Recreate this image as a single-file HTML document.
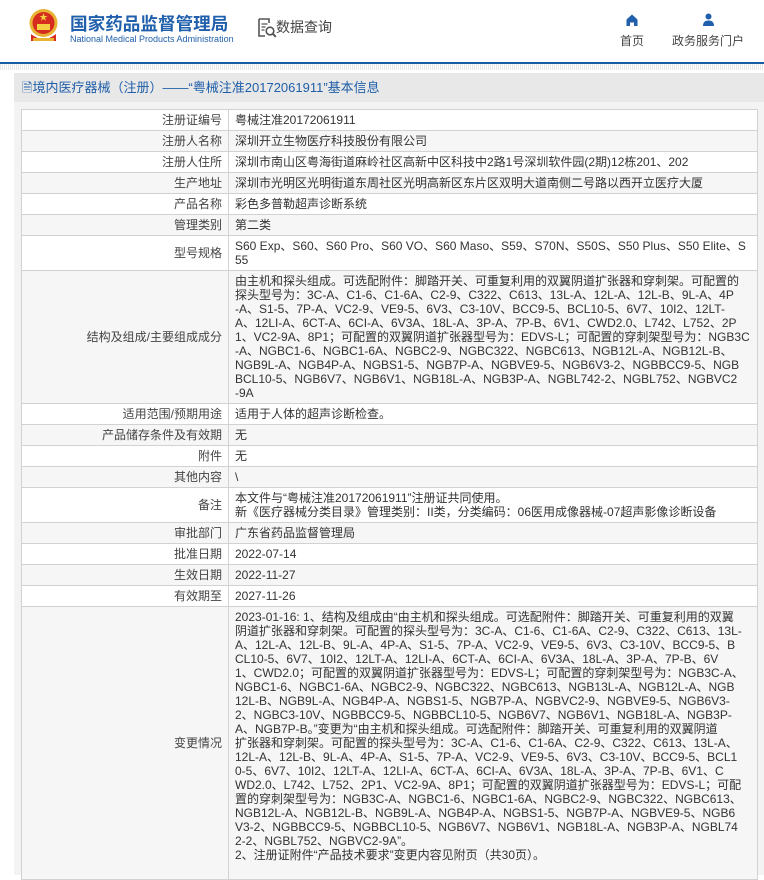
<!DOCTYPE html>
<html><head><meta charset="utf-8"><style>
*{margin:0;padding:0;box-sizing:border-box}
body{width:764px;height:875px;overflow:hidden;background:#fff;font-family:"Liberation Sans","Noto Sans CJK SC",sans-serif;color:#333;position:relative}
.hdr{position:absolute;left:0;top:0;width:764px;height:62px;background:#fff}
.line{position:absolute;left:0;top:62px;width:764px;height:2px;background:#1a5ba6}
.dots{position:absolute;left:0;top:64px;width:764px;height:6px;background:repeating-linear-gradient(90deg,#e6e6e6 0 1px,#fff 1px 2px)}
.panel{position:absolute;left:14px;top:73px;width:750px;height:802px;background:#f3f3f3}
.ttl{height:29px;background:#e8e8e8;color:#1f5ea8;font-size:13px;line-height:29px;padding-left:8px;white-space:nowrap}
table{position:absolute;left:7px;top:36px;width:737px;border-collapse:collapse;font-size:12px;background:#fff}
td{border:1px solid #d2d2d2;line-height:14px;padding:3px 6px 3px 6px;vertical-align:middle;white-space:nowrap;overflow:hidden}
td.l{width:207px;text-align:right;padding-right:6px;color:#444}
tr:nth-child(even) td{background:#f6f6f6}
</style></head><body>
<div class="hdr">
 <svg style="position:absolute;left:28px;top:8px" width="31" height="36" viewBox="0 0 31 36">
  <circle cx="15.5" cy="15" r="14" fill="#e8b233"/>
  <circle cx="15.5" cy="15" r="11" fill="#d62b1f"/>
  <polygon points="15.5,5 16.5,8 19.5,8 17,9.8 18,12.8 15.5,11 13,12.8 14,9.8 11.5,8 14.5,8" fill="#f5d040"/>
  <rect x="9" y="16" width="13" height="6" fill="#f5d040"/>
  <path d="M3 26 Q15.5 36 28 26 L28 33 L3 33Z" fill="#d62b1f"/>
  <rect x="5" y="30" width="21" height="3" fill="#e8b233"/>
 </svg>
 <div style="position:absolute;left:70px;top:11px;font-size:17.6px;font-weight:bold;color:#1f5fab;white-space:nowrap">国家药品监督管理局</div>
 <div style="position:absolute;left:70px;top:34px;font-size:9px;color:#1f5fab;white-space:nowrap">National Medical Products Administration</div>
 <svg style="position:absolute;left:257px;top:17px" width="20" height="22" viewBox="0 0 20 22">
  <path d="M2 2h10v4M2 2v17h6" fill="none" stroke="#555" stroke-width="1.6"/>
  <path d="M4.5 7h6M4.5 10h4M4.5 13h3" stroke="#555" stroke-width="1.3"/>
  <circle cx="13" cy="14" r="3.8" fill="none" stroke="#555" stroke-width="1.6"/>
  <path d="M15.8 16.8l3 3" stroke="#555" stroke-width="2"/>
 </svg>
 <div style="position:absolute;left:276px;top:17px;font-size:14px;color:#444;white-space:nowrap">数据查询</div>
 <svg style="position:absolute;left:626px;top:14px" width="12" height="12" viewBox="0 0 12 12"><path d="M6 0.5L11.5 5.5V12H8V8.5H4V12H0.5V5.5Z" fill="#1f5fab"/></svg>
 <div style="position:absolute;left:620px;top:32px;font-size:12px;color:#444">首页</div>
 <svg style="position:absolute;left:702px;top:13px" width="13" height="13" viewBox="0 0 13 13"><circle cx="6.5" cy="3.5" r="3" fill="#1f5fab"/><path d="M1 13Q1 7.5 6.5 7.5Q12 7.5 12 13Z" fill="#1f5fab"/></svg>
 <div style="position:absolute;left:672px;top:32px;font-size:12px;color:#444;white-space:nowrap">政务服务门户</div>
</div>
<div class="line"></div><div class="dots"></div>
<div class="panel">
 <div class="ttl">🗎境内医疗器械（注册）——“粤械注准20172061911”基本信息</div>
 <table>
 <tr><td class="l">注册证编号</td><td>粤械注准20172061911</td></tr>
 <tr><td class="l">注册人名称</td><td>深圳开立生物医疗科技股份有限公司</td></tr>
 <tr><td class="l">注册人住所</td><td>深圳市南山区粤海街道麻岭社区高新中区科技中2路1号深圳软件园(2期)12栋201、202</td></tr>
 <tr><td class="l">生产地址</td><td>深圳市光明区光明街道东周社区光明高新区东片区双明大道南侧二号路以西开立医疗大厦</td></tr>
 <tr><td class="l">产品名称</td><td>彩色多普勒超声诊断系统</td></tr>
 <tr><td class="l">管理类别</td><td>第二类</td></tr>
 <tr><td class="l">型号规格</td><td>S60 Exp、S60、S60 Pro、S60 VO、S60 Maso、S59、S70N、S50S、S50 Plus、S50 Elite、S<br>55</td></tr>
 <tr><td class="l">结构及组成/主要组成成分</td><td>由主机和探头组成。可选配附件：脚踏开关、可重复利用的双翼阴道扩张器和穿刺架。可配置的<br>探头型号为：3C-A、C1-6、C1-6A、C2-9、C322、C613、13L-A、12L-A、12L-B、9L-A、4P<br>-A、S1-5、7P-A、VC2-9、VE9-5、6V3、C3-10V、BCC9-5、BCL10-5、6V7、10I2、12LT-<br>A、12LI-A、6CT-A、6CI-A、6V3A、18L-A、3P-A、7P-B、6V1、CWD2.0、L742、L752、2P<br>1、VC2-9A、8P1；可配置的双翼阴道扩张器型号为：EDVS-L；可配置的穿刺架型号为：NGB3C<br>-A、NGBC1-6、NGBC1-6A、NGBC2-9、NGBC322、NGBC613、NGB12L-A、NGB12L-B、<br>NGB9L-A、NGB4P-A、NGBS1-5、NGB7P-A、NGBVE9-5、NGB6V3-2、NGBBCC9-5、NGB<br>BCL10-5、NGB6V7、NGB6V1、NGB18L-A、NGB3P-A、NGBL742-2、NGBL752、NGBVC2<br>-9A</td></tr>
 <tr><td class="l">适用范围/预期用途</td><td>适用于人体的超声诊断检查。</td></tr>
 <tr><td class="l">产品储存条件及有效期</td><td>无</td></tr>
 <tr><td class="l">附件</td><td>无</td></tr>
 <tr><td class="l">其他内容</td><td>\</td></tr>
 <tr><td class="l">备注</td><td>本文件与“粤械注准20172061911”注册证共同使用。<br>新《医疗器械分类目录》管理类别：II类，分类编码：06医用成像器械-07超声影像诊断设备</td></tr>
 <tr><td class="l">审批部门</td><td>广东省药品监督管理局</td></tr>
 <tr><td class="l">批准日期</td><td>2022-07-14</td></tr>
 <tr><td class="l">生效日期</td><td>2022-11-27</td></tr>
 <tr><td class="l">有效期至</td><td>2027-11-26</td></tr>
 <tr><td class="l">变更情况</td><td>2023-01-16: 1、结构及组成由“由主机和探头组成。可选配附件：脚踏开关、可重复利用的双翼<br>阴道扩张器和穿刺架。可配置的探头型号为：3C-A、C1-6、C1-6A、C2-9、C322、C613、13L-<br>A、12L-A、12L-B、9L-A、4P-A、S1-5、7P-A、VC2-9、VE9-5、6V3、C3-10V、BCC9-5、B<br>CL10-5、6V7、10I2、12LT-A、12LI-A、6CT-A、6CI-A、6V3A、18L-A、3P-A、7P-B、6V<br>1、CWD2.0；可配置的双翼阴道扩张器型号为：EDVS-L；可配置的穿刺架型号为：NGB3C-A、<br>NGBC1-6、NGBC1-6A、NGBC2-9、NGBC322、NGBC613、NGB13L-A、NGB12L-A、NGB<br>12L-B、NGB9L-A、NGB4P-A、NGBS1-5、NGB7P-A、NGBVC2-9、NGBVE9-5、NGB6V3-<br>2、NGBC3-10V、NGBBCC9-5、NGBBCL10-5、NGB6V7、NGB6V1、NGB18L-A、NGB3P-<br>A、NGB7P-B。”变更为“由主机和探头组成。可选配附件：脚踏开关、可重复利用的双翼阴道<br>扩张器和穿刺架。可配置的探头型号为：3C-A、C1-6、C1-6A、C2-9、C322、C613、13L-A、<br>12L-A、12L-B、9L-A、4P-A、S1-5、7P-A、VC2-9、VE9-5、6V3、C3-10V、BCC9-5、BCL1<br>0-5、6V7、10I2、12LT-A、12LI-A、6CT-A、6CI-A、6V3A、18L-A、3P-A、7P-B、6V1、C<br>WD2.0、L742、L752、2P1、VC2-9A、8P1；可配置的双翼阴道扩张器型号为：EDVS-L；可配<br>置的穿刺架型号为：NGB3C-A、NGBC1-6、NGBC1-6A、NGBC2-9、NGBC322、NGBC613、<br>NGB12L-A、NGB12L-B、NGB9L-A、NGB4P-A、NGBS1-5、NGB7P-A、NGBVE9-5、NGB6<br>V3-2、NGBBCC9-5、NGBBCL10-5、NGB6V7、NGB6V1、NGB18L-A、NGB3P-A、NGBL74<br>2-2、NGBL752、NGBVC2-9A”。<br>2、注册证附件“产品技术要求”变更内容见附页（共30页）。<br>&nbsp;</td></tr>
 </table>
</div>
</body></html>
